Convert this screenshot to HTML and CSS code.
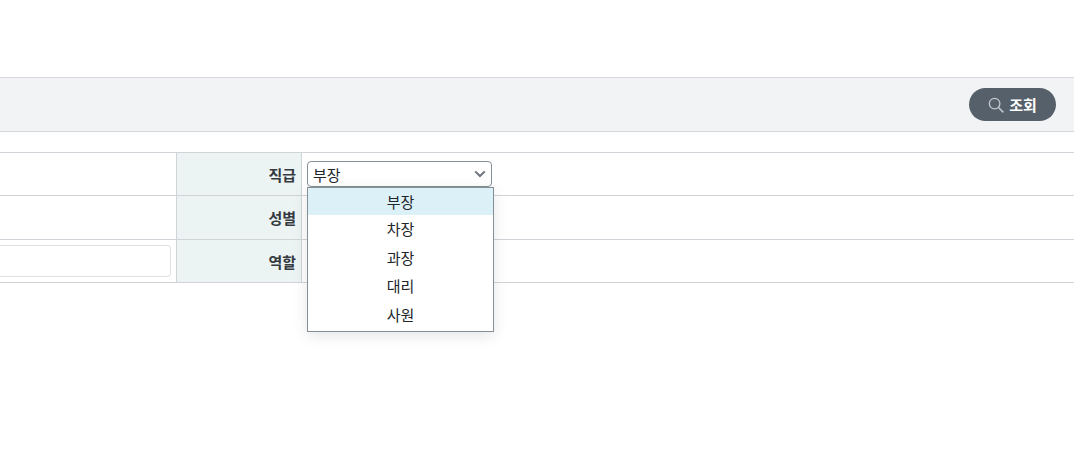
FILE: index.html
```html
<!DOCTYPE html>
<html lang="ko">
<head>
<meta charset="utf-8">
<title>조회</title>
<link rel="stylesheet" href="styles.css">
</head>
<body>
<div class="page">
  <div class="search-bar">
    <button class="search-btn" type="button">
      <svg class="search-icon" width="16" height="16" viewBox="0 0 16 16" fill="none" stroke="#c3c9ce" stroke-width="1.3"><circle cx="6.6" cy="6.6" r="5.3"/><path d="M10.5 10.5 15.4 15.4" stroke-width="1.5"/></svg>
      <span>조회</span>
    </button>
  </div>
  <div class="form">
    <div class="cell"></div>
    <div class="label">직급</div>
    <div class="value">
      <div class="select-wrap">
        <div class="select">
          <span>부장</span>
          <svg width="12" height="8" viewBox="0 0 12 8" fill="none" stroke="#6c737a" stroke-width="2"><path d="M1.2 1.4 6 6 10.8 1.4"/></svg>
        </div>
        <ul class="menu">
          <li class="active">부장</li>
          <li>차장</li>
          <li>과장</li>
          <li>대리</li>
          <li>사원</li>
        </ul>
      </div>
    </div>
    <div class="cell"></div>
    <div class="label">성별</div>
    <div class="value"></div>
    <div class="cell"><div class="input"></div></div>
    <div class="label">역할</div>
    <div class="value"></div>
  </div>
</div>
</body>
</html>
```
FILE: styles.css
```css
* { box-sizing: border-box; }
html, body { margin: 0; padding: 0; background: #fff; overflow: hidden; }
body {
  font-family: "Noto Sans CJK KR", "Liberation Sans", sans-serif;
  font-size: 15px;
  color: #212529;
}
.page { padding-top: 77px; height: 475px; }
.search-bar {
  height: 55px;
  background: #f2f3f5;
  border-top: 1px solid #d5d7da;
  border-bottom: 1px solid #d5d7da;
  display: flex;
  align-items: center;
  justify-content: flex-end;
  padding-right: 18px;
}
.search-btn {
  width: 87px;
  height: 33px;
  border: 0;
  border-radius: 17px;
  background: #56606a;
  color: #fff;
  font: 700 15px "Noto Sans CJK KR", sans-serif;
  display: flex;
  align-items: center;
  justify-content: center;
  gap: 5px;
  padding: 0;
}
.form {
  margin-top: 20px;
  display: grid;
  grid-template-columns: 176px 126px 1fr;
  grid-template-rows: 43px 44px 43px;
  border-bottom: 1px solid #d0d4d8;
  height: 131px;
}
.cell, .label, .value { border-top: 1px solid #d0d4d8; }
.cell { display: flex; align-items: center; padding-right: 5px; }
.label {
  background: #ebf3f3;
  border-left: 1px solid #d0d4d8;
  border-right: 1px solid #d0d4d8;
  display: flex;
  align-items: center;
  justify-content: flex-end;
  padding-right: 5px;
  font-weight: 700;
  color: #343a40;
}
.value { padding: 8px 0 0 5px; }
.input {
  width: 100%;
  height: 32px;
  background: #fff;
  border: 1px solid #dfe2e5;
  border-left: 0;
  border-radius: 0 4px 4px 0;
}
.select-wrap { position: relative; width: 185px; }
.select {
  height: 26px;
  border: 1px solid #868e96;
  border-radius: 4px;
  background: #fff;
  display: flex;
  align-items: center;
  justify-content: space-between;
  padding: 0 5px 0 5px;
}
.menu {
  position: absolute;
  top: 26px;
  left: 0;
  z-index: 2;
  width: 187px;
  height: 145px;
  margin: 0;
  padding: 0;
  list-style: none;
  background: #fff;
  border: 1px solid #868e96;
  box-shadow: 0 4px 14px rgba(0, 0, 0, 0.1);
  text-align: center;
}
.menu li { height: 28.5px; line-height: 27px; }
.menu li.active { background: #dcf0f7; height: 27px; }
```
